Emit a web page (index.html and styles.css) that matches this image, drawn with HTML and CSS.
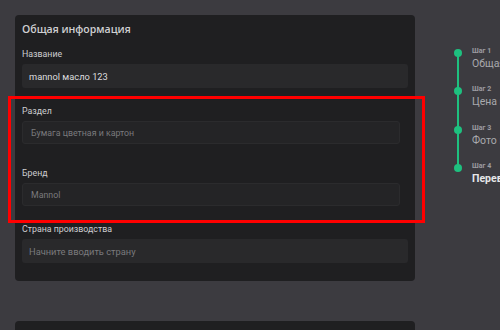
FILE: index.html
```html
<!DOCTYPE html>
<html lang="ru">
<head>
<meta charset="utf-8">
<link rel="stylesheet" href="styles.css">
</head>
<body>
<div class="page">
  <div class="main">
    <section class="card">
      <h2 class="card-title">Общая информация</h2>
      <div class="field">
        <label class="label">Название</label>
        <div class="input filled">mannol масло 123</div>
      </div>
      <div class="group">
        <div class="field">
          <label class="label">Раздел</label>
          <div class="input boxed placeholder">Бумага цветная и картон</div>
        </div>
        <div class="field field-wide">
          <label class="label">Бренд</label>
          <div class="input boxed placeholder">Mannol</div>
        </div>
      </div>
      <div class="field field-last">
        <label class="label">Страна производства</label>
        <div class="input placeholder">Начните вводить страну</div>
      </div>
    </section>
    <section class="card card-next"></section>
  </div>
  <nav class="stepper">
    <div class="line"></div>
    <div class="step">
      <span class="dot"></span>
      <div class="step-text"><div class="step-num">Шаг 1</div><div class="step-name">Общая информация</div></div>
    </div>
    <div class="step">
      <span class="dot"></span>
      <div class="step-text"><div class="step-num">Шаг 2</div><div class="step-name">Цена и наличие</div></div>
    </div>
    <div class="step">
      <span class="dot"></span>
      <div class="step-text"><div class="step-num">Шаг 3</div><div class="step-name">Фото и описание</div></div>
    </div>
    <div class="step">
      <span class="dot"></span>
      <div class="step-text"><div class="step-num">Шаг 4</div><div class="step-name active">Перевод</div></div>
    </div>
  </nav>
  <div class="highlight"></div>
</div>
</body>
</html>
```
FILE: styles.css
```css
* { box-sizing: border-box; }
html, body { margin: 0; padding: 0; }
body {
  width: 500px;
  height: 330px;
  overflow: hidden;
  background: #3c3b40;
  font-family: Roboto, "Noto Sans", sans-serif;
}
.page {
  position: relative;
  display: flex;
  align-items: flex-start;
  padding: 15px 0 0 15px;
  height: 330px;
  overflow: hidden;
}
.main {
  width: 400px;
  flex: none;
  display: flex;
  flex-direction: column;
  gap: 40px;
}
.card {
  background: #1f1f21;
  border-radius: 4px;
  padding: 7px 7px 18px 7px;
}
.card-next { height: 60px; }
.card-title {
  margin: 0;
  font-family: "Open Sans", Inter, sans-serif;
  font-weight: 600;
  font-size: 10.5px;
  line-height: 14px;
  color: #cfcfd2;
}
.field {
  display: flex;
  flex-direction: column;
  gap: 4px;
  margin-top: 12px;
}
.group .field { margin-top: 17px; margin-right: 8px; }
.group .field-wide { margin-top: 23px; }
.field-last { margin-top: 17px !important; }
.label {
  font-size: 8.8px;
  line-height: 12px;
  color: #cdcdd0;
}
.input {
  height: 24px;
  border-radius: 3px;
  background: #29292b;
  padding: 0 7px;
  display: flex;
  align-items: center;
  font-size: 9.3px;
  color: #dcdcde;
  white-space: nowrap;
}
.input.boxed {
  height: 23px;
  background: #242426;
  border: 1px solid #2b2b2d;
  padding: 0 8px;
  font-size: 8.8px;
}
.input.placeholder { color: #7a7a7d; }
.stepper {
  position: relative;
  margin-left: 39px;
  margin-top: 31px;
  display: flex;
  flex-direction: column;
  flex: none;
}
.line {
  position: absolute;
  left: 3px;
  top: 7px;
  width: 2px;
  height: 116px;
  background: #1ec07f;
}
.step {
  display: flex;
  align-items: flex-start;
  height: 38.33px;
  gap: 10px;
}
.dot {
  flex: none;
  width: 8px;
  height: 8px;
  border-radius: 50%;
  background: #1ec07f;
  margin-top: 3px;
  position: relative;
}
.step-text { white-space: nowrap; }
.step-num {
  font-size: 7px;
  line-height: 10px;
  font-weight: 700;
  color: #9c9ca0;
}
.step-name {
  font-size: 10.5px;
  line-height: 15px;
  color: #a9a9ad;
}
.step-name.active { color: #e6e6e8; font-weight: 700; }
.highlight {
  position: absolute;
  left: 8px;
  top: 96px;
  width: 417px;
  height: 127px;
  border: 3px solid #ff0000;
  pointer-events: none;
}
```
